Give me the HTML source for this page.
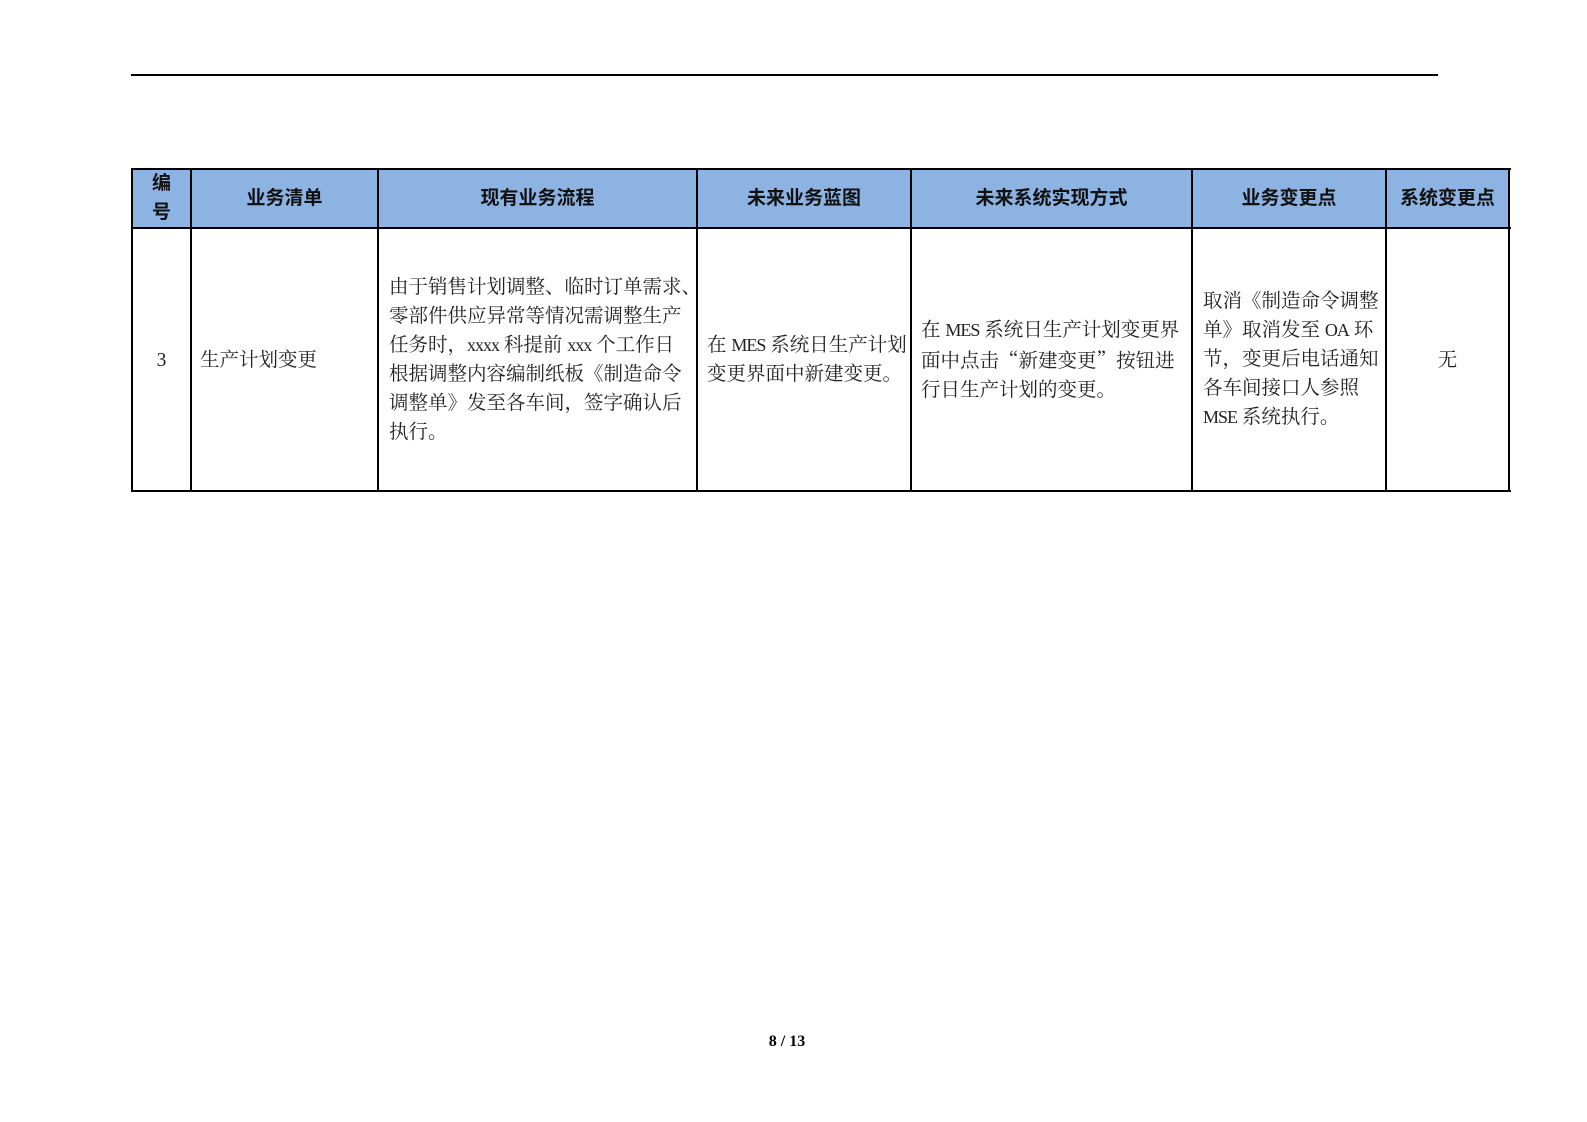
<!DOCTYPE html>
<html><head><meta charset="utf-8"><style>
html,body{margin:0;padding:0;background:#fff;width:1587px;height:1122px;overflow:hidden;position:relative}
.t{position:absolute;font-family:"Liberation Serif","Noto Serif CJK SC",serif;font-size:19.5px;line-height:29px;white-space:nowrap;color:#222}
.t i{font-style:normal;letter-spacing:-1px;font-size:18px}
.t q{quotes:none;font-family:"Noto Serif CJK SC",serif}
.h{position:absolute;font-family:"Liberation Sans","Noto Sans CJK SC",sans-serif;font-weight:bold;font-size:19px;line-height:29px;white-space:nowrap;color:#111;text-align:center}
.b{position:absolute;background:#000}
</style></head><body>
<div class="b" style="left:131px;top:74px;width:1307px;height:2px"></div>
<div style="position:absolute;left:132px;top:169px;width:1377px;height:59px;background:#8DB3E2"></div>
<div class="b" style="left:131px;top:168px;width:1380px;height:2px"></div>
<div class="b" style="left:131px;top:227px;width:1380px;height:2px"></div>
<div class="b" style="left:131px;top:490px;width:1380px;height:2px"></div>
<div class="b" style="left:131px;top:168px;width:2px;height:324px"></div>
<div class="b" style="left:190px;top:168px;width:2px;height:324px"></div>
<div class="b" style="left:377px;top:168px;width:2px;height:324px"></div>
<div class="b" style="left:696px;top:168px;width:2px;height:324px"></div>
<div class="b" style="left:910px;top:168px;width:2px;height:324px"></div>
<div class="b" style="left:1191px;top:168px;width:2px;height:324px"></div>
<div class="b" style="left:1385px;top:168px;width:2px;height:324px"></div>
<div class="b" style="left:1508px;top:168px;width:2px;height:324px"></div>
<div class="h" style="left:133px;width:57px;top:169px">编</div>
<div class="h" style="left:133px;width:57px;top:198px">号</div>
<div class="h" style="left:192px;width:185px;top:184px">业务清单</div>
<div class="h" style="left:379px;width:317px;top:184px">现有业务流程</div>
<div class="h" style="left:698px;width:212px;top:184px">未来业务蓝图</div>
<div class="h" style="left:912px;width:279px;top:184px">未来系统实现方式</div>
<div class="h" style="left:1193px;width:192px;top:184px">业务变更点</div>
<div class="h" style="left:1387px;width:121px;top:184px">系统变更点</div>
<div class="t" style="left:133px;width:57px;text-align:center;top:346px">3</div>
<div class="t" style="left:200px;top:346px">生产计划变更</div>
<div class="t" style="left:389px;top:273px">由于销售计划调整、临时订单需求、<br>零部件供应异常等情况需调整生产<br>任务时，<i>xxxx</i> 科提前 <i>xxx</i> 个工作日<br>根据调整内容编制纸板《制造命令<br>调整单》发至各车间，签字确认后<br>执行。</div>
<div class="t" style="left:707px;top:331px">在 <i>MES</i> 系统日生产计划<br>变更界面中新建变更。</div>
<div class="t" style="left:921px;top:316px">在 <i>MES</i> 系统日生产计划变更界<br>面中点击<q>“</q>新建变更<q>”</q>按钮进<br>行日生产计划的变更。</div>
<div class="t" style="left:1203px;top:287px">取消《制造命令调整<br>单》取消发至 <i>OA</i> 环<br>节，变更后电话通知<br>各车间接口人参照<br><i>MSE</i> 系统执行。</div>
<div class="t" style="left:1387px;width:121px;text-align:center;top:346px">无</div>
<div style="position:absolute;left:737px;width:100px;top:1033px;text-align:center;font-family:'Liberation Serif',serif;font-weight:bold;font-size:16px">8 / 13</div>
</body></html>
